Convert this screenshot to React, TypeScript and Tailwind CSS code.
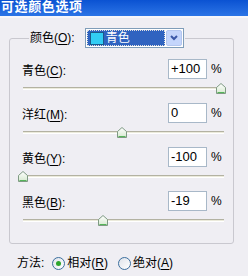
import React from "react";

type ChannelRow = {
  name: string;
  key: string;
  value: number;
  text: string;
};

const rows: ChannelRow[] = [
  { name: "青色", key: "C", value: 100, text: "+100" },
  { name: "洋红", key: "M", value: 0, text: "0" },
  { name: "黄色", key: "Y", value: -100, text: "-100" },
  { name: "黑色", key: "B", value: -19, text: "-19" },
];

const font = {
  fontFamily: '"Liberation Sans", "Noto Sans CJK SC", sans-serif',
};

const Hotkey: React.FC<{ name: string; k: string }> = ({ name, k }) => (
  <span>
    {name}(<span className="underline underline-offset-2">{k}</span>):
  </span>
);

const Thumb = () => (
  <svg width="10" height="11" viewBox="0 0 10 11">
    <defs>
      <linearGradient id="tg" x1="0" y1="0" x2="0" y2="1">
        <stop offset="0" stopColor="#ffffff" />
        <stop offset="1" stopColor="#d6e9cf" />
      </linearGradient>
    </defs>
    <path
      d="M0.5 4.5 L5 0.5 L9.5 4.5 V10.5 H0.5 Z"
      fill="url(#tg)"
      stroke="#7f9a83"
    />
    <path d="M1.5 9.5 H8.5" stroke="#55b45a" />
  </svg>
);

const Slider: React.FC<{ value: number }> = ({ value }) => {
  const left = ((value + 100) / 200) * 198;
  return (
    <div className="relative h-[12px] mt-[4px] mr-[-1px]">
      <div className="absolute left-[1px] right-0 top-[4px] h-[3px] border-t border-[#b3b2a2] border-b border-b-white bg-[#ebeadb]" />
      <div className="absolute top-0" style={{ left: left - 4 }}>
        <Thumb />
      </div>
    </div>
  );
};

const Radio: React.FC<{ checked?: boolean }> = ({ checked }) => (
  <span className="w-[13px] h-[13px] rounded-full border border-[#3b6e9e] bg-gradient-to-br from-[#dfe3ea] to-[#ffffff] flex items-center justify-center">
    {checked && <span className="w-[5px] h-[5px] rounded-full bg-[#2ea52e]" />}
  </span>
);

export default function App() {
  return (
    <div
      className="w-[248px] h-[276px] bg-[#efeef3] text-[12px] text-black overflow-hidden"
      style={font}
    >
      <div className="h-[18px] bg-gradient-to-b from-[#0a52d2] to-[#2b74e6] border-b-2 border-[#f6f6fa] flex items-start pl-[1px]">
        <span className="text-white font-bold text-[13px] leading-[14px] tracking-[0.6px]">
          可选颜色选项
        </span>
      </div>

      <div className="pl-[9px] pt-[10px]">
        <fieldset className="w-[225px] border border-[#c9c8cf] rounded-[3px] pl-[12px] pr-[10px] pb-[8px]">
          <legend className="ml-[7px] px-[1px] flex items-center">
            <Hotkey name="颜色" k="O" />
            <div className="ml-[10px] w-[99px] h-[20px] border border-[#7f9db9] bg-white flex items-center">
              <div className="ml-[1px] w-[78px] h-[16px] bg-[#2f63c0] border border-dotted border-[#e0e0e0] flex items-center">
                <span className="ml-[2px] w-[14px] h-[13px] bg-[#31cdf4] border border-[#1b5a8a]" />
                <span className="ml-[2px] text-white">青色</span>
              </div>
              <div className="ml-auto mr-[1px] w-[16px] h-[16px] rounded-[2px] bg-[#c4d5fb] border border-[#b3c6ef] flex items-center justify-center">
                <svg width="8" height="6" viewBox="0 0 8 6">
                  <path d="M1 1 L4 4 L7 1" fill="none" stroke="#3a57a6" strokeWidth="2" />
                </svg>
              </div>
            </div>
          </legend>

          <div className="pt-[11px] flex flex-col">
            {rows.map((r) => (
              <div key={r.key} className="h-[44px] flex flex-col">
                <div className="h-[20px] flex items-center">
                  <span className="flex-1 pt-[4px]">
                    <Hotkey name={r.name} k={r.key} />
                  </span>
                  <div className="w-[39px] h-[20px] border border-[#a8b8c8] bg-white flex items-center pl-[2px] text-[13px]">
                    {r.text}
                  </div>
                  <span className="ml-[4px] w-[12px] text-[12px]">%</span>
                </div>
                <Slider value={r.value} />
              </div>
            ))}
          </div>
        </fieldset>
      </div>

      <div className="mt-[11px] h-[16px] pl-[17px] flex items-center">
        <span>方法:</span>
        <div className="ml-[8px] flex items-center">
          <Radio checked />
          <span className="ml-[2px]">
            相对(<span className="underline underline-offset-2">R</span>)
          </span>
        </div>
        <div className="ml-[10px] flex items-center">
          <Radio />
          <span className="ml-[2px]">
            绝对(<span className="underline underline-offset-2">A</span>)
          </span>
        </div>
      </div>
    </div>
  );
}
